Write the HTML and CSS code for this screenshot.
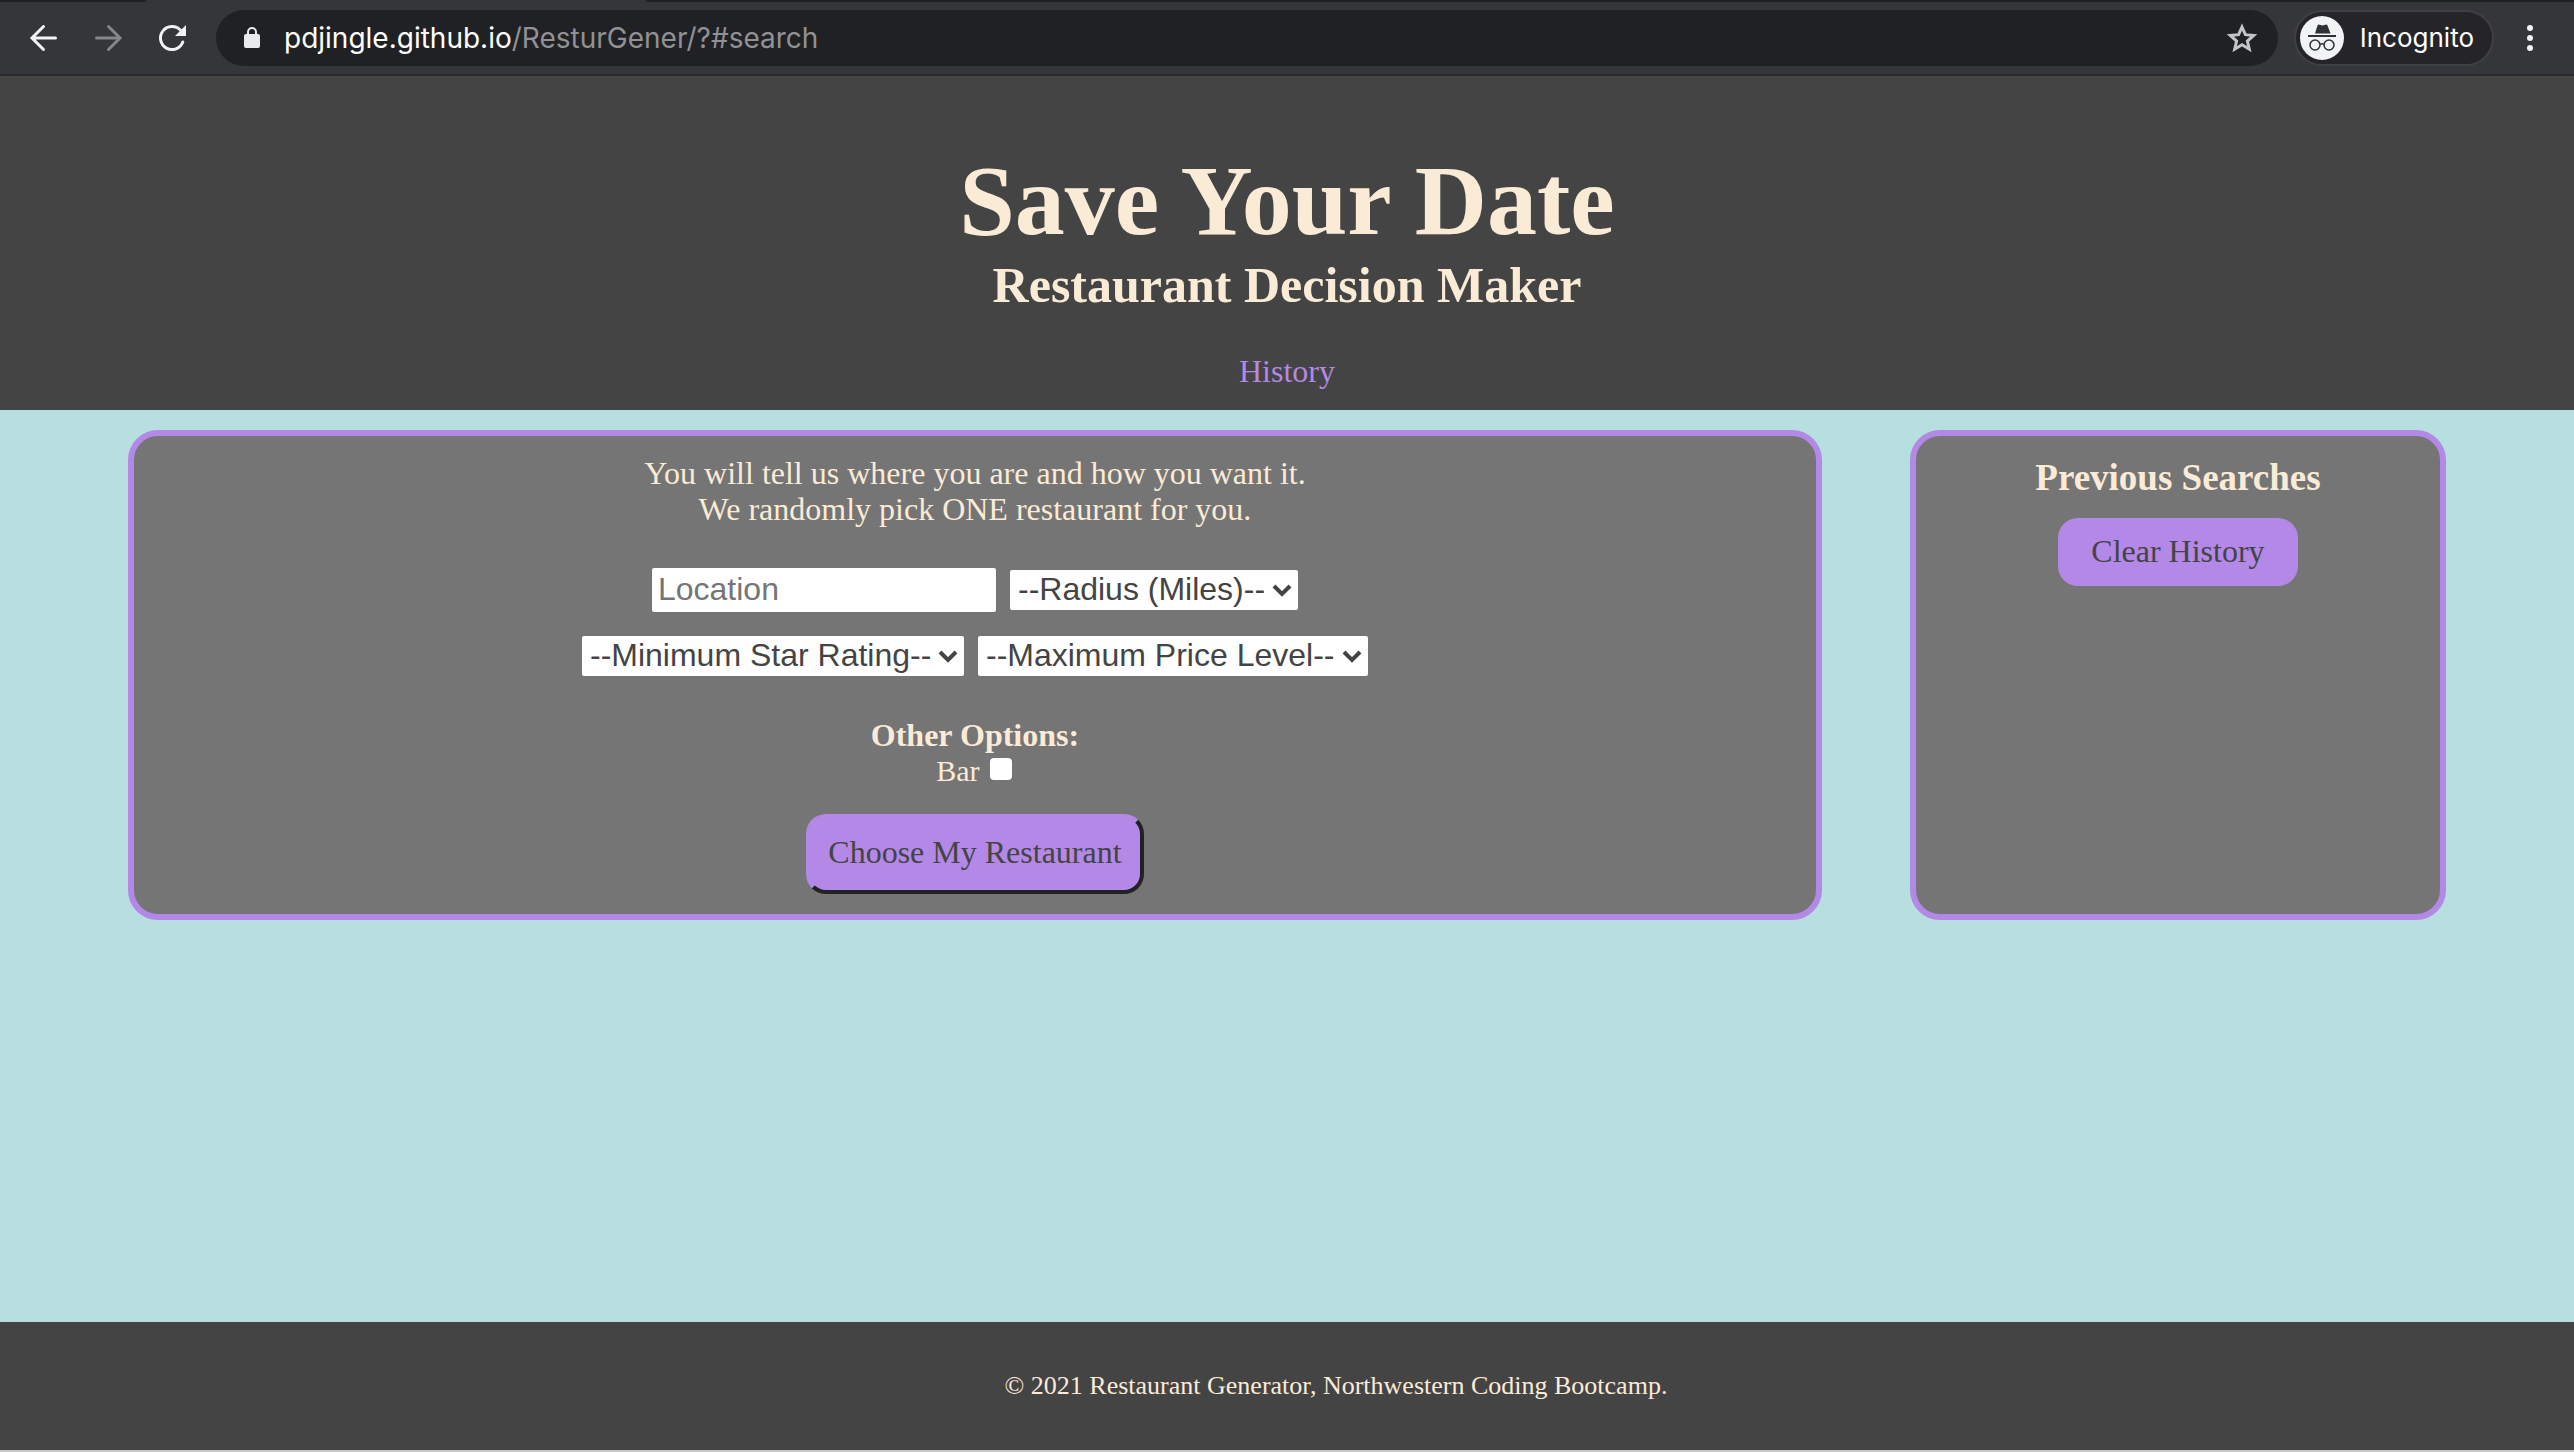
FILE: index.html
```html
<!DOCTYPE html>
<html lang="en">
<head>
<meta charset="utf-8">
<title>Save Your Date</title>
<link rel="stylesheet" href="styles.css">
</head>
<body>
<div class="tab-strip"><div class="tab"></div></div>
<div class="toolbar">
  <div class="nav-buttons">
    <button class="icon-button" aria-label="Back"><svg width="32" height="32" viewBox="0 0 32 32" fill="none" stroke="#f1f3f4" stroke-width="3" stroke-linecap="round"><path d="M27.500 16H5M15.500 4.500L4 16l11.500 11.500"/></svg></button>
    <button class="icon-button" aria-label="Forward"><svg width="32" height="32" viewBox="0 0 32 32" fill="none" stroke="#85868a" stroke-width="3" stroke-linecap="round"><path d="M4.500 16h23M16.500 4.500L28 16 16.500 27.500"/></svg></button>
    <button class="icon-button" aria-label="Reload"><svg width="32" height="32" viewBox="0 0 32 32"><path d="M26.800 20A11.500 11.500 0 1 1 24.500 8.300" fill="none" stroke="#f1f3f4" stroke-width="3" stroke-linecap="round"/><path d="M30 3v11H19z" fill="#f1f3f4"/></svg></button>
  </div>
  <div class="address">
    <svg class="lock" width="16" height="22" viewBox="0 0 16 22"><rect x="0" y="7" width="16" height="14" rx="2" fill="#e8eaed"/><path d="M4 8V5a4 4 0 0 1 8 0v3" fill="none" stroke="#e8eaed" stroke-width="2"/></svg>
    <span class="url">pdjingle.github.io<span class="path">/ResturGener/?#search</span></span>
    <button class="icon-button star" aria-label="Bookmark this page"><svg width="32" height="32" viewBox="0 0 32 32" fill="none" stroke="#c4c5c8" stroke-width="3"><path d="M16 5l3.400 7.700 8.300.8-6.300 5.500 1.900 8.200L16 22.800l-7.300 4.400 1.900-8.200-6.300-5.500 8.300-.8z"/></svg></button>
  </div>
  <div class="incognito">
    <svg width="44" height="44" viewBox="0 0 44 44"><circle cx="22" cy="22" r="22" fill="#f1f3f4"/><path d="M15 17.500L17.500 9.500q.5-1.200 2-.8l3 .8 3-.8q1.500-.4 2 .8L30.500 17.500z" fill="#303136"/><path d="M8 20h28" stroke="#303136" stroke-width="2"/><g fill="none" stroke="#303136" stroke-width="1.500"><circle cx="15" cy="29" r="5"/><circle cx="29" cy="29" r="5"/><path d="M20 28.500q2-1.500 4 0"/></g></svg>
    <span>Incognito</span>
  </div>
  <button class="icon-button" aria-label="Menu"><svg width="8" height="28" viewBox="0 0 8 28" fill="#f1f3f4"><circle cx="4" cy="4" r="3"/><circle cx="4" cy="14" r="3"/><circle cx="4" cy="24" r="3"/></svg></button>
</div>
<header class="site-header">
  <h1>Save Your Date</h1>
  <h2>Restaurant Decision Maker</h2>
  <a class="history-link" href="#history">History</a>
</header>
<main class="content">
  <form class="card search">
    <p>You will tell us where you are and how you want it.<br>We randomly pick ONE restaurant for you.</p>
    <div class="fields">
      <div class="field-row">
        <input class="location" type="text" placeholder="Location" aria-label="Location">
        <span class="select-wrap"><select class="radius" aria-label="Radius in miles"><option>--Radius (Miles)--</option></select><svg class="chevron" width="20" height="14" viewBox="0 0 20 14"><path d="M2 3l8 8 8-8" fill="none" stroke="#444" stroke-width="4"/></svg></span>
      </div>
      <div class="field-row">
        <span class="select-wrap"><select class="rating" aria-label="Minimum star rating"><option>--Minimum Star Rating--</option></select><svg class="chevron" width="20" height="14" viewBox="0 0 20 14"><path d="M2 3l8 8 8-8" fill="none" stroke="#444" stroke-width="4"/></svg></span>
        <span class="select-wrap"><select class="price" aria-label="Maximum price level"><option>--Maximum Price Level--</option></select><svg class="chevron" width="20" height="14" viewBox="0 0 20 14"><path d="M2 3l8 8 8-8" fill="none" stroke="#444" stroke-width="4"/></svg></span>
      </div>
    </div>
    <div class="options">
      <strong>Other Options:</strong>
      <div class="option"><label for="bar">Bar</label><input id="bar" type="checkbox"></div>
    </div>
    <button class="choose" type="button">Choose My Restaurant</button>
  </form>
  <section class="card previous">
    <h3>Previous Searches</h3>
    <button class="clear" type="button">Clear History</button>
  </section>
</main>
<footer class="site-footer">© 2021 Restaurant Generator, Northwestern Coding Bootcamp.</footer>
</body>
</html>
```
FILE: styles.css
```css
* { box-sizing: border-box; }

body {
  display: flex;
  flex-direction: column;
  min-height: 100vh;
  margin: 0;
  background: #b7dfdf;
  color: #faebd7;
  font: 32px/36px "Liberation Serif", "Times New Roman", serif;
}

h1, h2, h3, p { margin: 0; }

.tab-strip {
  padding-left: 146px;
  background: #202124;
}

.tab {
  width: 500px;
  height: 2px;
  background: #35363a;
}

.toolbar {
  display: flex;
  align-items: center;
  height: 74px;
  padding: 0 40px 0 28px;
  border-bottom: 2px solid #28292c;
  background: #35363a;
  font-family: Inter, sans-serif;
}

.nav-buttons { display: flex; gap: 32px; }

.icon-button {
  display: flex;
  padding: 0;
  border: 0;
  background: none;
}

.address {
  display: flex;
  flex: 1;
  align-items: center;
  height: 56px;
  margin-left: 28px;
  padding: 0 20px 0 28px;
  border-radius: 28px;
  background: #202124;
}

.url {
  flex: 1;
  margin-left: 24px;
  color: #fff;
  font-size: 28px;
}

.path { color: #909194; }

.incognito {
  display: flex;
  align-items: center;
  gap: 16px;
  height: 56px;
  margin: 0 32px 0 16px;
  padding: 0 18px 0 4px;
  border: 2px solid #3f4045;
  border-radius: 28px;
  background: #242429;
  color: #fff;
  font-size: 26px;
}

.site-header {
  display: flex;
  flex-direction: column;
  align-items: center;
  padding: 70px 0 21px;
  background: #444;
}

h1 { font-size: 100px; line-height: 110px; }
h2 { font-size: 50px; line-height: 58px; }

.history-link {
  margin-top: 39px;
  color: #b388e6;
  text-decoration: none;
}

.content {
  display: grid;
  flex: 1;
  grid-template-columns: 79fr 25fr;
  grid-template-rows: auto 1fr;
  gap: 88px;
  padding: 20px 128px;
}

.card {
  display: flex;
  flex-direction: column;
  align-items: center;
  padding: 20px;
  border: 6px solid #b388e6;
  border-radius: 30px;
  background: #757575;
  text-align: center;
}

.search { padding-top: 19px; }

.fields {
  display: flex;
  flex-direction: column;
  gap: 24px;
  margin-top: 41px;
}

.field-row {
  display: flex;
  align-items: center;
  justify-content: center;
  gap: 14px;
}

.location, select {
  border: 0;
  border-radius: 2px;
  background: #fff;
  color: #444;
  font: 32px/36px "Liberation Sans", Arial, sans-serif;
}

.location {
  width: 344px;
  height: 44px;
  padding: 2px 6px 4px;
}

.location::placeholder { color: #757575; opacity: 1; }

.select-wrap { display: flex; position: relative; }

select {
  height: 40px;
  padding: 0 8px 2px;
  appearance: none;
}

.radius { width: 288px; }
.rating { width: 382px; }
.price { width: 390px; }

.chevron {
  position: absolute;
  top: 13px;
  right: 6px;
  pointer-events: none;
}

.options {
  margin-top: 41px;
}

.option {
  display: flex;
  justify-content: center;
  gap: 10px;
  font-size: 30px;
}

.option input {
  width: 22px;
  height: 22px;
  margin: 5px 2px 0 0;
  border-radius: 4px;
  background: #fff;
  appearance: none;
}

.choose {
  margin-top: 25px;
  padding: 16px 18px 20px;
  border: 4px solid;
  border-color: #b388e6 #222 #222 #b388e6;
  border-radius: 20px;
  background: #b388e6;
  color: #444;
  font: inherit;
}

.clear {
  margin-top: 18px;
  padding: 15px 33px 17px;
  border: 0;
  border-radius: 20px;
  background: #b388e6;
  color: #444;
  font: inherit;
}

h3 { font-size: 37px; line-height: 44px; }

.site-footer {
  padding: 49px 0 49px 98px;
  border-bottom: 2px solid #c8c8c8;
  background: #444;
  font-size: 26px;
  line-height: 30px;
  text-align: center;
}
```
